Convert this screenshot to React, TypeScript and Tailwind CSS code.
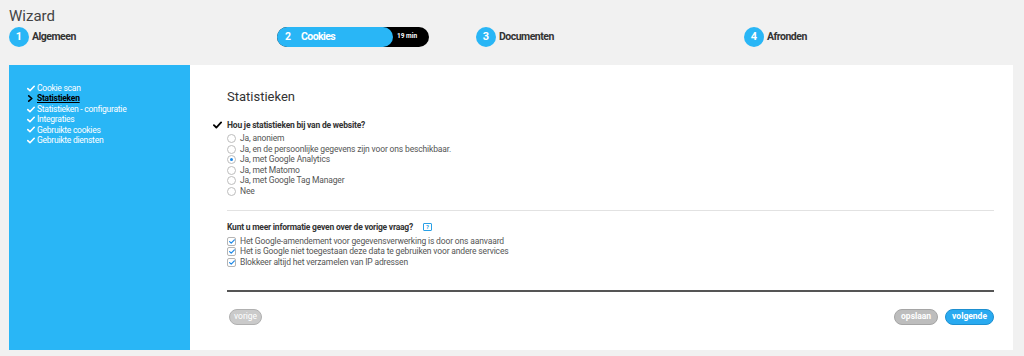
import React from 'react';

const BLUE = 'bg-[#29b6f6]';

function Check({ className }: { className?: string }) {
  return (
    <svg viewBox="0 0 10 8" className={className} fill="none">
      <path d="M1 4.2 L3.7 6.8 L9 1.2" stroke="currentColor" strokeWidth="2" strokeLinecap="round" strokeLinejoin="round" />
    </svg>
  );
}

function Chevron() {
  return (
    <svg viewBox="0 0 8 8" className="w-[7px] h-[7px] text-black" fill="none">
      <path d="M2 1 L5.5 4 L2 7" stroke="currentColor" strokeWidth="1.8" strokeLinecap="round" strokeLinejoin="round" />
    </svg>
  );
}

function StepCircle({ n }: { n: number }) {
  return (
    <span className={`w-[20px] h-[20px] rounded-full ${BLUE} text-white font-bold text-[11px] flex items-center justify-center shrink-0`}>
      {n}
    </span>
  );
}

function StepLabel({ children }: { children: React.ReactNode }) {
  return <span className="ml-[3px] text-[10.5px] font-bold text-[#333] tracking-[-0.5px]">{children}</span>;
}

function Steps() {
  return (
    <div className="flex items-center h-[20px] mt-[2px]">
      <div className="w-[268px] flex items-center">
        <StepCircle n={1} />
        <StepLabel>Algemeen</StepLabel>
      </div>
      <div className="w-[199px] flex items-center">
        <div className="w-[152px] h-[20px] bg-black rounded-full flex items-center">
          <div className={`w-[116px] h-full rounded-full ${BLUE} flex items-center pl-[8px] text-white font-bold text-[10.5px]`}>
            <span>2</span>
            <span className="ml-[10px] tracking-[-0.6px]">Cookies</span>
          </div>
          <span className="ml-[4px] text-[6.5px] font-bold text-white">19 min</span>
        </div>
      </div>
      <div className="w-[268px] flex items-center">
        <StepCircle n={3} />
        <StepLabel>Documenten</StepLabel>
      </div>
      <div className="flex items-center">
        <StepCircle n={4} />
        <StepLabel>Afronden</StepLabel>
      </div>
    </div>
  );
}

const menu = [
  { label: 'Cookie scan', done: true },
  { label: 'Statistieken', active: true },
  { label: 'Statistieken - configuratie', done: true },
  { label: 'Integraties', done: true },
  { label: 'Gebruikte cookies', done: true },
  { label: 'Gebruikte diensten', done: true },
];

function Sidebar() {
  return (
    <div className={`w-[181px] shrink-0 ${BLUE} pl-[18px] pt-[18px]`}>
      {menu.map(m => (
        <div key={m.label} className="flex items-center h-[10.45px]">
          <span className="w-[10px] flex items-center">
            {m.active ? <Chevron /> : <Check className="w-[8px] h-[7px] text-white" />}
          </span>
          <span className={m.active ? 'text-[8.5px] font-bold text-black underline tracking-[-0.25px]' : 'text-[8.5px] text-white tracking-[-0.25px]'}>
            {m.label}
          </span>
        </div>
      ))}
    </div>
  );
}

const options = [
  'Ja, anoniem',
  'Ja, en de persoonlijke gegevens zijn voor ons beschikbaar.',
  'Ja, met Google Analytics',
  'Ja, met Matomo',
  'Ja, met Google Tag Manager',
  'Nee',
];

const extras = [
  'Het Google-amendement voor gegevensverwerking is door ons aanvaard',
  'Het is Google niet toegestaan deze data te gebruiken voor andere services',
  'Blokkeer altijd het verzamelen van IP adressen',
];

function Content() {
  return (
    <div className="flex-1 bg-white pl-[37px] pr-[19px] pt-[24px] flex flex-col">
      <h1 className="text-[13px] leading-[16px] text-[#333]">Statistieken</h1>

      <div className="flex items-center h-[12px] mt-[14px] -ml-[14px]">
        <Check className="w-[9px] h-[8px] text-black" />
        <span className="ml-[5px] text-[8.5px] font-bold text-[#333] tracking-[-0.2px]">Hou je statistieken bij van de website?</span>
      </div>

      <div className="mt-[2.5px]">
        {options.map((o, i) => (
          <div key={o} className="flex items-center h-[10.5px]">
            <span className="w-[9px] h-[9px] rounded-full border border-[#bdbdbd] bg-white flex items-center justify-center shrink-0">
              {i === 2 && <span className="w-[3px] h-[3px] rounded-full bg-[#1e88e5]" />}
            </span>
            <span className="ml-[4px] text-[8.5px] text-[#555] tracking-[-0.15px]">{o}</span>
          </div>
        ))}
      </div>

      <div className="h-px bg-[#e2e2e2] mt-[13.5px]" />

      <div className="flex items-center h-[12px] mt-[10px]">
        <span className="text-[8.5px] font-bold text-[#333] tracking-[-0.22px]">Kunt u meer informatie geven over de vorige vraag?</span>
        <span className="ml-[10px] w-[9px] h-[8px] border border-[#29a0e6] rounded-[1px] text-[6px] font-bold text-[#29a0e6] flex items-center justify-center leading-none">?</span>
      </div>

      <div className="mt-[3px]">
        {extras.map(e => (
          <div key={e} className="flex items-center h-[10.5px]">
            <span className="w-[9px] h-[9px] rounded-[2px] border border-[#b5b5b5] bg-white flex items-center justify-center shrink-0">
              <Check className="w-[6px] h-[5px] text-[#1e88e5]" />
            </span>
            <span className="ml-[4px] text-[8.5px] text-[#555] tracking-[-0.15px]">{e}</span>
          </div>
        ))}
      </div>

      <div className="h-[2px] bg-[#555] mt-[22px]" />

      <div className="flex items-center mt-[17px] pl-[2px]">
        <button className="h-[16px] px-[4px] rounded-full bg-[#cacaca] border border-[#b0b0b0] text-[8.5px] text-white leading-none">
          vorige
        </button>
        <div className="flex-1" />
        <button className="h-[16px] px-[6px] rounded-full bg-[#bdbdbd] border border-[#a5a5a5] text-[8.5px] font-bold text-white leading-none">
          opslaan
        </button>
        <button className="ml-[7px] h-[16px] px-[6px] rounded-full bg-[#29aaf0] border border-[#1d8fd0] text-[8.5px] font-bold text-white leading-none">
          volgende
        </button>
      </div>
    </div>
  );
}

export default function App() {
  return (
    <div className="w-full h-[356px] bg-[#f1f1f1] pt-[7px] pl-[9px] pr-[11px] font-['Roboto','Liberation_Sans',sans-serif] overflow-hidden">
      <div className="text-[15px] leading-[18px] text-[#444]">Wizard</div>
      <Steps />
      <div className="flex mt-[18px] h-[285px]">
        <Sidebar />
        <Content />
      </div>
    </div>
  );
}
